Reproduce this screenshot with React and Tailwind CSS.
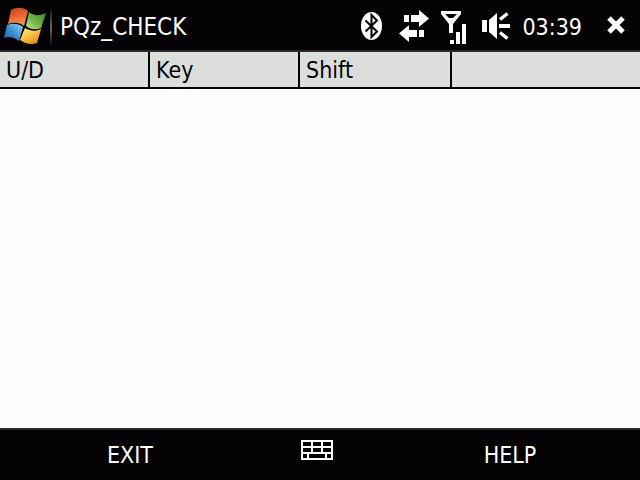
import React from "react";

const columns = [
  { label: "U/D", width: "w-[150px]" },
  { label: "Key", width: "w-[150px]" },
  { label: "Shift", width: "w-[152px]" },
  { label: "", width: "" },
];

// ================= ICONS =================
function StartFlag() {
  return (
    <svg width="43" height="40" viewBox="3 7 43 40" aria-hidden="true">
      <defs>
        <linearGradient id="red" x1="0" y1="0" x2="0.3" y2="1">
          <stop offset="0" stopColor="#b8421c" />
          <stop offset="0.5" stopColor="#e8622c" />
          <stop offset="1" stopColor="#f09058" />
        </linearGradient>
        <linearGradient id="green" x1="1" y1="0" x2="0" y2="1">
          <stop offset="0" stopColor="#3c8c2c" />
          <stop offset="0.55" stopColor="#74b444" />
          <stop offset="1" stopColor="#c8e49c" />
        </linearGradient>
        <linearGradient id="blue" x1="0" y1="1" x2="1" y2="0">
          <stop offset="0" stopColor="#1c5cac" />
          <stop offset="0.5" stopColor="#3c90d4" />
          <stop offset="1" stopColor="#a0d4f4" />
        </linearGradient>
        <linearGradient id="yellow" x1="0" y1="0" x2="0.7" y2="1">
          <stop offset="0" stopColor="#fcec9c" />
          <stop offset="0.5" stopColor="#fcc444" />
          <stop offset="1" stopColor="#dc8c1c" />
        </linearGradient>
      </defs>
      <path fill="url(#red)" d="M11 10C16 7 23 7 28 11L24 26C19 22 14 22 8 24Z" />
      <path fill="url(#green)" d="M29 12C34 16 40 16 46 13L41 28C36 30 31 30 26 26Z" />
      <path fill="url(#blue)" d="M7 25C12 23 18 23 23 27L19 41C14 37 9 36 4 38Z" />
      <path fill="url(#yellow)" d="M25 28C30 31 35 32 41 29L37 43C31 45 26 44 20 40Z" />
    </svg>
  );
}

function BluetoothIcon() {
  return (
    <svg width="26" height="34" viewBox="361 10 26 34" role="img" aria-label="Bluetooth">
      <ellipse cx="371.5" cy="26" rx="10.5" ry="14" fill="#fcfefc" />
      <path
        d="M365.5 20.5L377 31.5L371.5 37V15L377 20.5L365.5 31.5"
        fill="none"
        stroke="#040204"
        strokeWidth="2"
      />
    </svg>
  );
}

function ConnectionIcon() {
  return (
    <svg width="30" height="34" viewBox="399 10 30 34" role="img" aria-label="Connection">
      <path
        fill="#fcfefc"
        d="M404 15h5v7h-5zM411 15h8v-5l10 8.500l-10 8.500v-5h-8zM419 30h5v7h-5zM417 30h-8v-5l-10 8.500l10 8.500v-5h8z"
      />
    </svg>
  );
}

function SignalIcon() {
  return (
    <svg width="29" height="34" viewBox="441 10 29 34" role="img" aria-label="Signal">
      <path
        fill="#fcfefc"
        fillRule="evenodd"
        d="M441 11h20v3l-8 10v9h-4v-9l-8-10zM445 14l4 4h4l4-4z"
      />
      <path fill="#fcfefc" d="M450 40h4v4h-4zM456 32h4v12h-4zM462 24h4v20h-4z" />
    </svg>
  );
}

function SpeakerIcon() {
  return (
    <svg width="28" height="34" viewBox="482 10 28 34" role="img" aria-label="Volume">
      <path fill="#fcfefc" d="M482 20h5v12h-5zM489 20l8-7v26l-8-7zM499 24h11v4h-11z" />
      <path d="M500 19.500l7.500-6M500 32.500l7.500 6" stroke="#fcfefc" strokeWidth="3.500" />
    </svg>
  );
}

function CloseIcon() {
  return (
    <svg width="20" height="20" viewBox="0 0 20 20" aria-hidden="true">
      <path d="M3 3l14 14M17 3L3 17" stroke="#fcfefc" strokeWidth="5" />
    </svg>
  );
}

function KeyboardIcon() {
  return (
    <svg width="32" height="20" viewBox="0 0 32 20" aria-hidden="true">
      <path
        fill="#fcfefc"
        fillRule="evenodd"
        d="M0 0h32v20H0zM2 2v4h8V2zM12 2v4h8V2zM22 2v4h8V2zM2 8v4h8V8zM12 8v4h8V8zM22 8v4h8V8zM2 14v4h4v-4zM8 14v4h16v-4zM26 14v4h4v-4z"
      />
    </svg>
  );
}

// ================= UI =================
function App() {
  return (
    <div className="flex min-h-screen flex-col bg-[#fcfefc] font-['DejaVu_Sans_Condensed','DejaVu_Sans',sans-serif] text-[23px] leading-8">

      {/* TITLE BAR */}
      <header className="flex h-[52px] items-center border-b-2 border-[#2c2a2c] bg-[#040204] pt-1 pr-3.5 pl-[3px] text-[#fcfefc]">
        <button type="button" aria-label="Start">
          <StartFlag />
        </button>
        <div className="mr-2 ml-1 h-9 w-0.5 bg-linear-to-b from-[#141214] via-[#6c6a6c] to-[#141214]" />
        <h1 className="text-2xl">PQz_CHECK</h1>
        <div className="ml-auto flex items-center gap-3">
          <BluetoothIcon />
          <ConnectionIcon />
          <SignalIcon />
          <SpeakerIcon />
          <time>03:39</time>
          <button type="button" aria-label="Close" className="mb-1 ml-3">
            <CloseIcon />
          </button>
        </div>
      </header>

      {/* KEY LOG */}
      <main className="flex-1">
        <table className="w-full table-fixed border-separate border-spacing-0 text-[#040204]">
          <thead>
            <tr>
              {columns.map((col, i) => (
                <th
                  key={i}
                  scope="col"
                  className={`h-[37px] border-r-2 border-b-2 border-[#040204] bg-[#dcdedc] py-0 pr-0 pl-1.5 text-left font-normal last:border-r-0 ${col.width}`}
                >
                  {col.label}
                </th>
              ))}
            </tr>
          </thead>
          <tbody />
        </table>
      </main>

      {/* SOFT KEYS */}
      <footer className="grid h-[52px] grid-cols-[26fr_12fr_26fr] items-center border-t-2 border-[#2c2a2c] bg-[#040204] text-[#fcfefc]">
        <button type="button">EXIT</button>
        <button type="button" aria-label="Keyboard" className="flex justify-center pr-1.5 pb-2.5">
          <KeyboardIcon />
        </button>
        <button type="button">HELP</button>
      </footer>
    </div>
  );
}

export default App;
